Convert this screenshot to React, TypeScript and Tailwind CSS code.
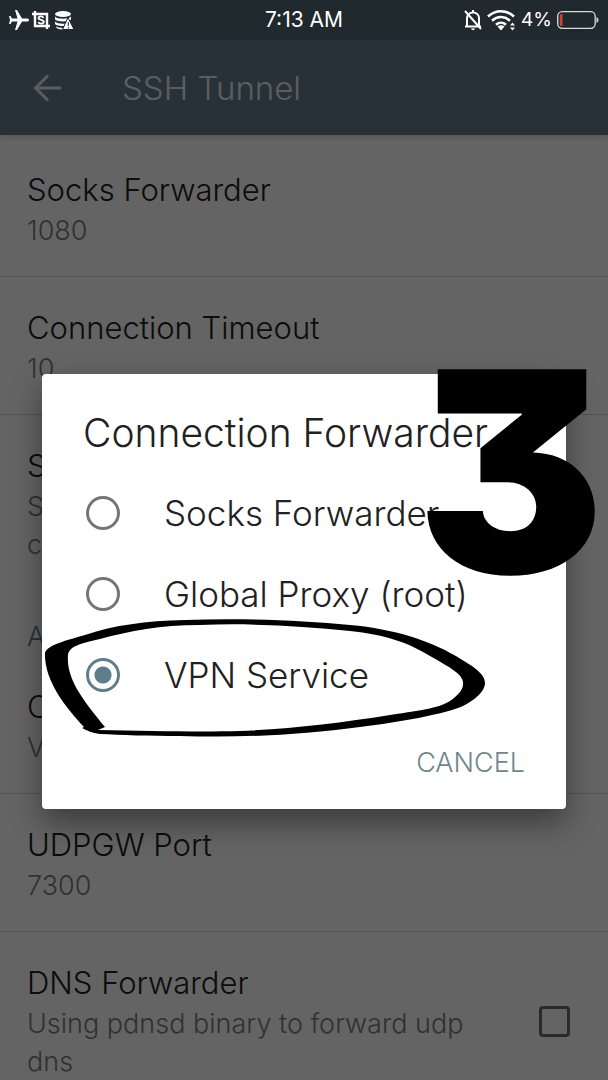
import { useState } from "react"
import type { ReactNode } from "react"

type Preference = {
  title: string
  summary: string[]
  checkbox?: boolean
  last?: boolean
}

const mainPrefs: Preference[] = [
  { title: "Socks Forwarder", summary: ["1080"] },
  { title: "Connection Timeout", summary: ["10"] },
  { title: "SSH Compression", summary: ["Shrink the traffic that goes over the", "connection"], last: true },
]

const advancedPrefs: Preference[] = [
  { title: "Connection Forwarder", summary: ["VPN Service"] },
  { title: "UDPGW Port", summary: ["7300"] },
  { title: "DNS Forwarder", summary: ["Using pdnsd binary to forward udp", "dns"], checkbox: true, last: true },
]

const forwarders = ["Socks Forwarder", "Global Proxy (root)", "VPN Service"]

function StatusBar() {
  return (
    <header className="relative z-20 grid grid-cols-3 items-center h-10 shrink-0 px-[9px] bg-[#20292e] text-white font-normal">
      <div className="flex items-center gap-[3px]">
        <svg viewBox="2 2 20 20" className="w-5 h-5 rotate-90" fill="currentColor">
          <path d="M22 16v-2l-8.500-5V3.500a1.500 1.500 0 0 0-3 0V9L2 14v2l8.500-2.500V19L8 20.500V22l4-1 4 1v-1.500L13.500 19v-5.500z" />
        </svg>
        <svg viewBox="0 0 18 18" className="w-[18px] h-[18px]" fill="none" stroke="currentColor">
          <path d="M0 3h15v15M3 0v15h15" strokeWidth="2.400" />
          <path d="M11.500 6.800C11 5.700 10.200 5.400 9 5.400c-1.500 0-2.500.6-2.500 1.700 0 2.500 5.200 1.100 5.200 3.700 0 1.200-1.100 1.900-2.600 1.900-1.400 0-2.400-.5-2.800-1.700" strokeWidth="1.800" />
        </svg>
        <svg viewBox="0 0 20 20" className="ml-px w-5 h-5">
          <ellipse cx="9" cy="4" rx="8" ry="3" fill="currentColor" />
          <path d="M1 6.500c2 3 14 3 16 0v3c-2 2.500-14 2.500-16 0zM1 11.500c2 2 7 2.500 10 2l-1 2.500c-4 0-8-.5-9-2zM2 16.200c2 1.500 4 1.600 7 1.700l-.5 1.600C5 19.500 2 18.500 2 16.200z" fill="currentColor" />
          <path d="M14 7.500l6 12H8.500z" fill="currentColor" stroke="#20292e" strokeWidth="1" />
          <path d="M14.300 12v4M14.300 17v1.500" stroke="#20292e" strokeWidth="1" />
        </svg>
      </div>
      <time className="text-center text-[21px] leading-6">7:13 AM</time>
      <div className="flex items-center justify-end gap-1">
        <svg viewBox="0 0 20 22" className="w-5 h-[22px]" fill="none" stroke="currentColor" strokeWidth="2">
          <path d="M4 17V9.500C4 6 6.500 3.500 10 3.500S16 6 16 9.500V17M2 17.500h16M10 1v2.500M2 2l16 18" />
          <path d="M8 19.500h4c-.5 2-3.500 2-4 0z" fill="currentColor" stroke="none" />
        </svg>
        <svg viewBox="0 0 28 22" className="w-7 h-[22px]" fill="none" stroke="currentColor" strokeWidth="2.600">
          <path d="M1 7.500c7.500-7 18.500-7 26 0M5 11.800c5.500-5 12.500-5 18 0M9 15.800c3-2.800 7-2.800 10 0" />
          <path d="M10.500 17.500c2-1.800 5-1.800 7 0L14 21.500z" fill="currentColor" stroke="none" />
          <path d="M23 16.500l2.500-3 2.500 3zM23 18.500l2.500 3 2.500-3z" fill="currentColor" stroke="none" />
        </svg>
        <span className="ml-0.5 text-[19px] leading-6">4%</span>
        <svg viewBox="0 0 42 18" className="ml-px w-[42px] h-[18px]">
          <rect x="0.700" y="0.700" width="37.500" height="16.600" rx="4.500" fill="none" stroke="#d6dadb" strokeWidth="1.300" />
          <path d="M5.500 3v12H4.500C3 15 2.700 14 2.700 13V5c0-1.300.5-2 1.800-2z" fill="#c9462c" />
          <path d="M39.500 6c2.600.8 2.600 5.200 0 6z" fill="#d6dadb" />
        </svg>
      </div>
    </header>
  )
}

function PreferenceRow({ pref }: { pref: Preference }) {
  const text: ReactNode = (
    <>
      <span className="block text-[31px] leading-[44px] text-[#212121]">{pref.title}</span>
      {pref.summary.map((line) => (
        <span key={line} className="block text-[27px] leading-[38px] text-[#7b7b7b]">{line}</span>
      ))}
    </>
  )

  return (
    <li className={`pt-[29px] pb-[26px] px-[27px] ${pref.last ? "" : "border-b border-[#cccccc]"}`}>
      {pref.checkbox ? (
        <label className="flex items-center justify-between">
          <span>{text}</span>
          <input
            type="checkbox"
            className="appearance-none shrink-0 mr-[11px] w-[31px] h-[31px] border-3 border-[#6a6a6a] rounded-sm checked:bg-[#607d8b]"
          />
        </label>
      ) : (
        text
      )}
    </li>
  )
}

export default function App() {
  const [forwarder, setForwarder] = useState("VPN Service")
  const [open, setOpen] = useState(true)

  return (
    <div className="relative flex flex-col h-screen overflow-hidden bg-[#fafafa] font-['Inter',sans-serif] font-light">
      <StatusBar />

      <div className="flex items-center h-[95px] shrink-0 px-8 bg-[#607d8b] shadow-md">
        <button aria-label="Back" className="w-[30px] text-[#e6e6e0]">
          <svg viewBox="0 0 30 28" className="w-[30px] h-7" fill="none" stroke="currentColor" strokeWidth="3">
            <path d="M29 14H4M16 1.500L3.500 14 16 26.500" />
          </svg>
        </button>
        <h1 className="ml-[60px] text-[33px] leading-10 text-[#e9e9ee]">SSH Tunnel</h1>
      </div>

      {/* Preferences */}
      <main className="pt-1">
        <ul>
          {mainPrefs.map((p) => <PreferenceRow key={p.title} pref={p} />)}
        </ul>
        <h2 className="pt-7 px-[27px] text-[27px] leading-[38px] text-[#607d8b]">Advanced</h2>
        <ul>
          {advancedPrefs.map((p) => <PreferenceRow key={p.title} pref={p} />)}
        </ul>
      </main>

      {/* Forwarder dialog */}
      {open && (
        <div className="absolute inset-0 z-10 flex items-center justify-center px-[42px] pt-[103px] bg-black/60">
          <div role="dialog" aria-labelledby="dialog-title" className="w-full rounded-sm bg-white shadow-[0_14px_30px_rgba(0,0,0,0.4)]">
            <h2 id="dialog-title" className="pt-9 pb-4 px-[41px] text-[39px] leading-[46px] text-[#212121] whitespace-nowrap">
              Connection Forwarder
            </h2>
            {forwarders.map((name) => (
              <label key={name} className="flex items-center gap-11 h-[81px] px-11 text-[35px] leading-[42px] text-[#212121] whitespace-nowrap">
                <input
                  type="radio"
                  name="forwarder"
                  checked={forwarder === name}
                  onChange={() => setForwarder(name)}
                  className="appearance-none shrink-0 w-[34px] h-[34px] rounded-full border-3 border-[#757575] checked:border-[#607d8b] checked:bg-[radial-gradient(circle,#607d8b_8px,transparent_9px)]"
                />
                {name}
              </label>
            ))}
            <div className="flex justify-end pt-6 pb-[22px] pr-[41px]">
              <button onClick={() => setOpen(false)} className="h-12 text-[27px] leading-8 text-[#6f878c]">
                CANCEL
              </button>
            </div>
          </div>
        </div>
      )}

      {/* Step number and marker */}
      <div className="absolute left-[417px] top-[332px] z-30 text-[280px] leading-[280px] font-black text-black pointer-events-none [font-feature-settings:'cv09']">
        3
      </div>
      <svg viewBox="0 0 608 1080" className="absolute left-0 top-0 z-30 w-[608px] h-[1080px] pointer-events-none">
        <path
          fillRule="evenodd"
          d="M45 653C47 646 60 642 85 635C115 625 145 621 185 620C240 618 300 620 350 625C395 629 430 641 454 655C471 665 485 673 485 683C485 692 473 701 463 706C445 714 400 722 360 727C300 735 240 738 180 736C150 736 120 735 100 734C92 733 86 730 82 728L84 727C65 707 44 680 45 653ZM68 655C66 680 85 702 105 727L98 730C150 731 200 732 240 731C290 729 340 723 390 715C425 710 441 707 450 701C457 696 464 690 463 682C462 673 447 666 430 656C405 641 385 635 350 631C300 626 250 623 200 625C160 625 130 631 100 639C82 643 69 646 68 655Z"
        />
      </svg>
    </div>
  )
}
